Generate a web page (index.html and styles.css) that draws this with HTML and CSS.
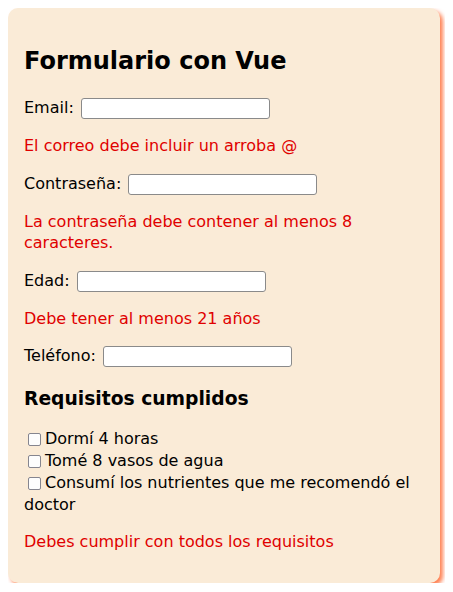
FILE: index.html
```html
<!DOCTYPE html>
<html>
<head>
  <meta charset="utf-8">
  <title>Formulario con Vue</title>
  <link rel="stylesheet" href="styles.css">
</head>
<body>

  <div id="app" class="card">
    <h2>Formulario con Vue</h2>

    <p class="field">
      <label for="email">Email:</label>
      <input id="email" type="text">
    </p>
    <p class="error">El correo debe incluir un arroba @</p>

    <p class="field">
      <label for="password">Contraseña:</label>
      <input id="password" type="password">
    </p>
    <p class="error">La contraseña debe contener al menos 8 caracteres.</p>

    <p class="field">
      <label for="age">Edad:</label>
      <input id="age" type="text">
    </p>
    <p class="error">Debe tener al menos 21 años</p>

    <p class="field">
      <label for="phone">Teléfono:</label>
      <input id="phone" type="text">
    </p>

    <h3>Requisitos cumplidos</h3>

    <div class="checks">
      <div class="check"><input type="checkbox" id="r1"><label for="r1">Dormí 4 horas</label></div>
      <div class="check"><input type="checkbox" id="r2"><label for="r2">Tomé 8 vasos de agua</label></div>
      <div class="check"><input type="checkbox" id="r3"><label for="r3">Consumí los nutrientes que me recomendó el doctor</label></div>
    </div>

    <p class="error">Debes cumplir con todos los requisitos</p>
  </div>

</body>
</html>
```

FILE: styles.css
```css
body {
  margin: 8px;
  font-family: Verdana, 'DejaVu Sans', sans-serif;
  font-size: 16px;
  line-height: 1.3;
  color: #000;
  background-color: #fff;
}
.card {
  width: 400px;
  padding: 16px 16px 14px 16px;
  background-color: #faebd7;
  border-radius: 10px;
  box-shadow: 3px 3px 4px #ff7f50;
}
h2 {
  font-size: 24px;
  margin: 22px 0 20px 0;
}
h3 {
  font-size: 1.17em;
  margin: 19px 0 16px 0;
}
p {
  margin: 16px 0;
}
.field input {
  width: 185px;
  height: 17px;
  margin: 1px 0 1px 2px;
  padding: 1px;
  border: 1px solid #8a8a8a;
  border-radius: 3px;
  background: #fff;
  vertical-align: middle;
}
.error {
  color: #e00000;
}
.checks {
  margin-top: 16px;
}
.check {
  line-height: 22px;
}
.check input {
  appearance: none;
  -webkit-appearance: none;
  box-sizing: border-box;
  width: 13px;
  height: 13px;
  margin: 0 4px 0 4px;
  border: 1.5px solid #85858f;
  border-radius: 2px;
  background: #fdfdfd;
  vertical-align: -2px;
}
```
